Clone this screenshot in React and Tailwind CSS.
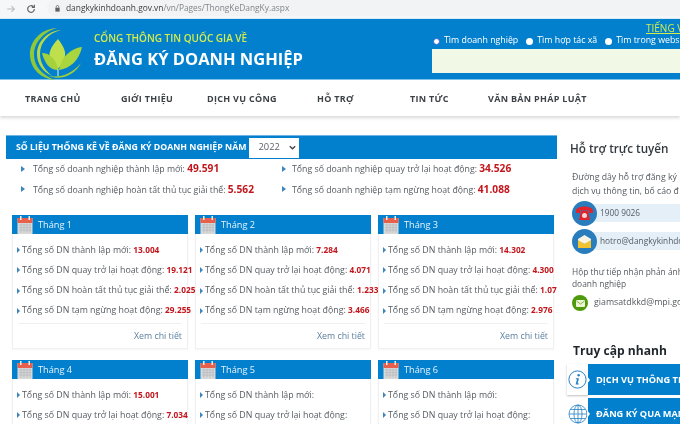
import React from "react";

const Logo = () => (
  <svg width="56" height="56" viewBox="0 0 56 56" className="shrink-0">
    <path d="M29 2 C12 3 1 16 2 30 C3 44 14 53 27 54 C14 49 6 40 6 29 C6 16 16 6 29 2Z" fill="#8fc93a" />
    <path d="M33 4 C20 5 9 15 9 28 C9 38 15 46 24 50 C17 44 12 37 12 28 C12 16 21 7 33 4Z" fill="#b5d944" />
    <path d="M53 37 C47 49 33 55 21 50 C32 52 44 48 53 37Z" fill="#9ccc3c" />
    <path d="M30 13 C23 20 20 28 22 33 C24 38 27 40 30 43 C34 38 38 33 37 26 C36 21 33 17 30 13Z" fill="#bfe04a" />
    <path d="M14 27 C21 27 29 33 30 44 C22 44 17 38 14 27Z" fill="#a5d23c" />
    <path d="M54 21 C46 22 34 28 31 44 C43 42 51 34 54 21Z" fill="#a9d53e" />
    <path d="M30 43V50" stroke="#e8f5c0" strokeWidth="1" />
  </svg>
);

const CalendarIcon = () => (
  <svg width="16" height="18" viewBox="0 0 16 18" className="shrink-0">
    <rect x="0.5" y="2" width="15" height="16" fill="#d8d8d8" />
    <rect x="0.5" y="2" width="15" height="5" fill="#e8604c" />
    <rect x="3" y="0" width="1.5" height="4" fill="#f1f1f1" />
    <rect x="11.5" y="0" width="1.5" height="4" fill="#f1f1f1" />
    <path d="M2 9H14M2 11.5H14M2 14H14M4 7.5V16.5M7 7.5V16.5M10 7.5V16.5M13 7.5V16.5" stroke="#aeb4b8" strokeWidth="0.6" />
  </svg>
);

const Bullet = ({ large }) => (
  <span
    className={
      large
        ? "shrink-0 w-0 h-0 border-y-[3px] border-y-transparent border-l-[4px] border-l-[#3d86bd]"
        : "shrink-0 w-0 h-0 border-y-[3px] border-y-transparent border-l-[3px] border-l-[#3d86bd]"
    }
  />
);

const Row = ({ label, value }) => (
  <div className="flex items-center gap-[2px] h-[20.3px] whitespace-nowrap">
    <Bullet />
    <span>
      {label}: <b className="text-[#c3161c] text-[8.3px] font-bold">{value}</b>
    </span>
  </div>
);

const Card = ({ title, v }) => (
  <div className="w-[176px] h-[134px] bg-white border-x border-b border-[#eef0f2] shadow-[0_1px_2px_rgba(0,0,0,0.04)]">
    <div className="-mx-px h-[19px] bg-[#0280ce] flex items-center pl-[5px] gap-[5px] text-[#e8f3fb] text-[9.2px]">
      <CalendarIcon />
      <span>{title}</span>
    </div>
    <div className="px-[4px] pt-[6px] text-[#555b60] text-[8.8px]">
      <Row label="Tổng số DN thành lập mới" value={v[0]} />
      <Row label="Tổng số DN quay trở lại hoạt động" value={v[1]} />
      <Row label="Tổng số DN hoàn tất thủ tục giải thể" value={v[2]} />
      <Row label="Tổng số DN tạm ngừng hoạt động" value={v[3]} />
      <div className="mx-[1px] mt-[2px] border-t border-[#eef0f2] pt-[6px] text-right text-[#5d7f9c]">Xem chi tiết</div>
    </div>
  </div>
);

const Stat = ({ label, value, wide }) => (
  <div className={wide ? "flex items-center gap-[8px] whitespace-nowrap w-[261px]" : "flex items-center gap-[6px] whitespace-nowrap"}>
    <Bullet large />
    <span>
      {label}: <b className="text-[#c3161c] text-[10.2px] font-bold">{value}</b>
    </span>
  </div>
);

const Radio = ({ on, label }) => (
  <span className="flex items-center gap-[4px]">
    <span className={on ? "w-[7px] h-[7px] rounded-full bg-white border-[1.5px] border-[#2c64e0]" : "w-[7px] h-[7px] rounded-full bg-white"} />
    <span>{label}</span>
  </span>
);

const months = [
  ["Tháng 1", ["13.004", "19.121", "2.025", "29.255"]],
  ["Tháng 2", ["7.284", "4.071", "1.233", "3.466"]],
  ["Tháng 3", ["14.302", "4.300", "1.07", "2.976"]],
  ["Tháng 4", ["15.001", "7.034", "", ""]],
  ["Tháng 5", ["", "", "", ""]],
  ["Tháng 6", ["", "", "", ""]],
];

export default function App() {
  return (
    <div
      className="w-[680px] h-[424px] overflow-hidden bg-white relative blur-[0.3px]"
      style={{ fontFamily: '"Open Sans","Noto Sans",sans-serif' }}
    >
      {/* browser bar */}
      <div className="h-[18px] bg-[#f6f7f8] flex items-center text-[#5f6368] relative">
        <svg width="10" height="10" viewBox="0 0 24 24" className="ml-[6px]" fill="none" stroke="#b8bcc0" strokeWidth="2.5">
          <path d="M3 12H20M13 5l7 7-7 7" />
        </svg>
        <svg width="10" height="10" viewBox="0 0 24 24" className="ml-[10px]" fill="none" stroke="#5f6368" strokeWidth="2.8">
          <path d="M20 12a8 8 0 1 1-2.5-5.8M20 2v6h-6" />
        </svg>
        <div className="ml-[11px] flex-1 h-[16px] bg-[#f1f3f4] rounded-l-full flex items-center pl-[8px] gap-[6px] text-[8.4px] whitespace-nowrap -translate-y-[1px]">
          <svg width="5" height="7" viewBox="0 0 7 9" preserveAspectRatio="none">
            <rect x="0.5" y="3.5" width="6" height="5" fill="#5f6368" />
            <path d="M1.7 3.5V2.4a1.8 1.8 0 0 1 3.6 0v1.1" fill="none" stroke="#5f6368" />
          </svg>
          <span>
            <span className="text-[#3c4043]">dangkykinhdoanh.gov.vn</span>
            <span className="text-[#80868b]">/vn/Pages/ThongKeDangKy.aspx</span>
          </span>
        </div>
      </div>

      {/* header */}
      <div className="h-[62px] bg-[#0280ce] border-b border-[#7cc4ee] border-t border-t-[#d6e9f6] flex">
        <div className="ml-[28px] mt-[7px]"><Logo /></div>
        <div className="ml-[10px] pt-[11px] whitespace-nowrap w-[338px]">
          <div className="text-[#d5ec4a] text-[10px] leading-[16px] font-semibold">CỔNG THÔNG TIN QUỐC GIA VỀ</div>
          <div className="text-white text-[16.5px] leading-[26px] font-bold">ĐĂNG KÝ DOANH NGHIỆP</div>
        </div>
        <div className="flex-1 min-w-0 text-white text-[8.8px] whitespace-nowrap">
          <div className="h-[15px] pl-[214px] pt-[3px] text-[#d5ec4a] text-[10px] leading-[12px] underline">TIẾNG VIỆT</div>
          <div className="flex gap-[8px] h-[14px] items-center pl-[1px]">
            <Radio on label="Tìm doanh nghiệp" />
            <Radio label="Tìm hợp tác xã" />
            <Radio label="Tìm trong website" />
          </div>
          <div className="h-[24px] mt-[1px] bg-[#f1f8e6]" />
        </div>
      </div>

      {/* nav */}
      <div className="h-[36px] flex items-center bg-white shadow-[0_2px_3px_rgba(0,0,0,0.15)] text-[#3d4247] text-[9px] font-bold tracking-[0.3px] whitespace-nowrap pl-[25px] pt-[1px]">
        <span className="w-[96px]">TRANG CHỦ</span>
        <span className="w-[86px]">GIỚI THIỆU</span>
        <span className="w-[110px]">DỊCH VỤ CÔNG</span>
        <span className="w-[93px]">HỖ TRỢ</span>
        <span className="w-[78px]">TIN TỨC</span>
        <span>VĂN BẢN PHÁP LUẬT</span>
      </div>

      <div className="flex pt-[19px]">
        {/* main */}
        <div className="w-[557px] shrink-0 pl-[6px] overflow-hidden h-[289px]">
          <div className="w-[551px] h-[24px] bg-[#0280ce] border-t border-[#6cb4e2] flex items-center pl-[10px] gap-[3px]">
            <span className="text-white text-[8.75px] font-bold whitespace-nowrap">SỐ LIỆU THỐNG KÊ VỀ ĐĂNG KÝ DOANH NGHIỆP NĂM</span>
            <span className="w-[50px] h-[20px] bg-white flex items-center justify-between pl-[9px] pr-[2px] text-[#5f6368] text-[9.4px]">
              2022
              <svg width="9" height="9" viewBox="0 0 10 10" fill="none" stroke="#444" strokeWidth="1.5"><path d="M2 3.5 5 6.5 8 3.5" /></svg>
            </span>
          </div>
          <div className="text-[#555b60] text-[8.75px] pl-[15px]">
            <div className="flex h-[20px] items-center">
              <Stat wide label="Tổng số doanh nghiệp thành lập mới" value="49.591" />
              <Stat label="Tổng số doanh nghiệp quay trở lại hoạt động" value="34.526" />
            </div>
            <div className="flex h-[21px] items-center">
              <Stat wide label="Tổng số doanh nghiệp hoàn tất thủ tục giải thể" value="5.562" />
              <Stat label="Tổng số doanh nghiệp tạm ngừng hoạt động" value="41.088" />
            </div>
          </div>
          <div className="grid grid-cols-[176px_176px_176px] gap-x-[7px] gap-y-[11px] pl-[6px] pt-[15px]">
            {months.map(([t, v]) => (
              <Card key={t} title={t} v={v} />
            ))}
          </div>
        </div>

        {/* sidebar */}
        <div className="flex-1 min-w-0 pl-[13px] whitespace-nowrap text-[#555b60] text-[8.3px]">
          <div className="text-[#333a40] text-[11.7px] font-semibold leading-[18px] pt-[4px]">Hỗ trợ trực tuyến</div>
          <div className="pl-[2px] pt-[13px] leading-[14px] text-[8.7px]">
            <div>Đường dây hỗ trợ đăng ký</div>
            <div>dịch vụ thông tin, bố cáo đ</div>
          </div>
          <div className="pl-[2px] pt-[3px]">
            <div className="flex items-center h-[25px] relative">
              <div className="absolute left-[12px] right-0 top-[3px] h-[18px] bg-[#e4eff8]" />
              <div className="relative shrink-0 w-[25px] h-[25px] rounded-full bg-[#2a7dbd] flex items-center justify-center">
                <svg width="19" height="15" viewBox="0 0 19 15">
                  <path d="M1 5C1 2 5 .5 9.5 .5S18 2 18 5V7H14V4.5H5V7H1Z" fill="#e3222a" />
                  <path d="M4 14L6 5H13L15 14Z" fill="#e3222a" />
                  <circle cx="9.5" cy="9.5" r="2.5" fill="#f3d9d9" />
                </svg>
              </div>
              <span className="relative ml-[3px]">1900 9026</span>
            </div>
            <div className="flex items-center h-[25px] mt-[3px] relative">
              <div className="absolute left-[12px] right-0 top-[3px] h-[18px] bg-[#e4eff8]" />
              <div className="relative shrink-0 w-[25px] h-[25px] rounded-full bg-[#2a7dbd] flex items-center justify-center">
                <svg width="15" height="14" viewBox="0 0 15 14">
                  <path d="M7.5 0 14 4V6L7.5 9 1 6V4Z" fill="#f7f4e4" />
                  <path d="M1 5 7.5 9 14 5V13H1Z" fill="#f2c230" />
                </svg>
              </div>
              <span className="relative ml-[3px]">hotro@dangkykinhdoanh</span>
            </div>
          </div>
          <div className="pl-[2px] pt-[12px] leading-[12px] text-[8.4px]">
            <div>Hộp thư tiếp nhận phản ánh</div>
            <div>doanh nghiệp</div>
          </div>
          <div className="pl-[2px] pt-[5px] flex items-center gap-[6px] text-[8.8px]">
            <div className="shrink-0 w-[16px] h-[16px] rounded-full bg-[#4d9a0c] flex items-center justify-center">
              <svg width="9" height="7" viewBox="0 0 9 7">
                <rect width="9" height="7" rx="1" fill="#eef5d6" />
                <path d="M.5 1 4.5 4 8.5 1" fill="none" stroke="#4d9a0c" strokeWidth="0.7" />
              </svg>
            </div>
            <span>giamsatdkkd@mpi.gov</span>
          </div>
          <div className="pl-[3px] pt-[31px] text-[#1f262c] text-[12.1px] font-bold leading-[18px]">Truy cập nhanh</div>
          <div className="pt-[4px] -ml-[13px] text-white text-[9.2px] font-bold">
            <div className="flex h-[31px] items-stretch ml-[10px]">
              <div className="w-[21px] shrink-0 bg-white shadow-[0_1px_2px_rgba(0,0,0,0.25)] flex items-center justify-center">
                <svg width="19" height="19" viewBox="0 0 19 19">
                  <circle cx="9.5" cy="9.5" r="8.6" fill="none" stroke="#2481c4" strokeWidth="1" />
                  <circle cx="10.6" cy="5.2" r="1.2" fill="#2481c4" />
                  <path d="M8 8.2H11L9.6 13.6H11L10.6 14.6H7.6L9 9.2H7.8Z" fill="#2481c4" />
                </svg>
              </div>
              <div className="flex-1 min-w-0 bg-[#0280ce] flex items-center pl-[8px] relative">
                <span className="absolute -left-[1px] top-[12px] w-0 h-0 border-y-[4px] border-y-transparent border-l-[3px] border-l-white" />
                DỊCH VỤ THÔNG TIN
              </div>
            </div>
            <div className="flex h-[31px] items-stretch ml-[10px] mt-[3px]">
              <div className="w-[21px] shrink-0 bg-white flex items-center justify-center">
                <svg width="20" height="20" viewBox="0 0 20 20" fill="none" stroke="#2481c4" strokeWidth="0.8">
                  <circle cx="10" cy="10" r="9" />
                  <ellipse cx="10" cy="10" rx="4" ry="9" />
                  <path d="M10 1V19M1 10H19M2.5 5.5H17.5M2.5 14.5H17.5" />
                </svg>
              </div>
              <div className="flex-1 min-w-0 bg-[#0280ce] flex items-center pl-[8px] relative">
                <span className="absolute -left-[1px] top-[12px] w-0 h-0 border-y-[4px] border-y-transparent border-l-[3px] border-l-white" />
                ĐĂNG KÝ QUA MẠNG
              </div>
            </div>
          </div>
        </div>
      </div>
    </div>
  );
}
